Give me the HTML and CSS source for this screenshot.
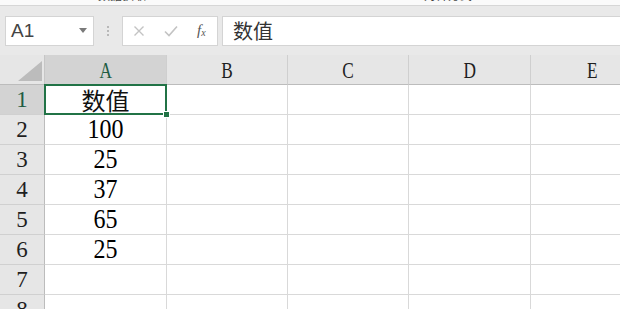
FILE: index.html
```html
<!DOCTYPE html>
<html lang="zh">
<head>
    <meta charset="utf-8">
    <title>数值</title>
    <link rel="stylesheet" href="styles.css">
</head>
<body>

<div class="ribbon">
    <span class="rb-label rb-data">数据获取</span>
    <span class="rb-launch rb-l1">⇲</span>
    <span class="rb-label rb-align">对齐方式</span>
    <span class="rb-launch rb-l2">⇲</span>
</div>

<div class="fbar">
    <div class="namebox">
        <span class="name">A1</span>
        <svg class="drop" width="8" height="5" viewBox="0 0 8 5"><path d="M0 0H8L4 5Z" fill="#7a7a7a"/></svg>
    </div>
    <div class="grip"><i></i><i></i><i></i></div>
    <div class="fxbox">
        <svg class="ico" width="12" height="12" viewBox="0 0 12 12"><path d="M1.5 1.5L10.5 10.5M10.5 1.5L1.5 10.5" stroke="#c3c3c3" stroke-width="1.4" fill="none"/></svg>
        <svg class="ico" width="14" height="12" viewBox="0 0 14 12"><path d="M1 6.5L5 10.5L13 1.5" stroke="#c3c3c3" stroke-width="1.6" fill="none"/></svg>
        <span class="fx">f<sub>x</sub></span>
    </div>
    <div class="formula">数值</div>
</div>

<div class="sheet">
    <div class="corner">
        <svg width="24" height="20" viewBox="0 0 24 20"><path d="M24 0V20H0Z" fill="#bcbcbc"/></svg>
    </div>
    <div class="colhead sel"><span>A</span></div>
    <div class="colhead"><span>B</span></div>
    <div class="colhead"><span>C</span></div>
    <div class="colhead"><span>D</span></div>
    <div class="colhead last"><span>E</span></div>

    <div class="rowhead sel">1</div>
    <div class="cell active">数值<span class="handle"></span></div>
    <div class="cell"></div><div class="cell"></div><div class="cell"></div><div class="cell last"></div>

    <div class="rowhead">2</div>
    <div class="cell"><span class="num">100</span></div>
    <div class="cell"></div><div class="cell"></div><div class="cell"></div><div class="cell last"></div>

    <div class="rowhead">3</div>
    <div class="cell"><span class="num">25</span></div>
    <div class="cell"></div><div class="cell"></div><div class="cell"></div><div class="cell last"></div>

    <div class="rowhead">4</div>
    <div class="cell"><span class="num">37</span></div>
    <div class="cell"></div><div class="cell"></div><div class="cell"></div><div class="cell last"></div>

    <div class="rowhead">5</div>
    <div class="cell"><span class="num">65</span></div>
    <div class="cell"></div><div class="cell"></div><div class="cell"></div><div class="cell last"></div>

    <div class="rowhead">6</div>
    <div class="cell"><span class="num">25</span></div>
    <div class="cell"></div><div class="cell"></div><div class="cell"></div><div class="cell last"></div>

    <div class="rowhead">7</div>
    <div class="cell"></div>
    <div class="cell"></div><div class="cell"></div><div class="cell"></div><div class="cell last"></div>

    <div class="rowhead">8</div>
    <div class="cell"></div>
    <div class="cell"></div><div class="cell"></div><div class="cell"></div><div class="cell last"></div>
</div>

</body>
</html>
```

FILE: styles.css
```css
html, body {
    margin: 0;
    padding: 0;
    overflow: hidden;
    background: #fff;
    font-family: "Liberation Sans", "Noto Sans CJK SC", sans-serif;
    color: #333;
}

/* bottom edge of the ribbon, mostly cut off */
.ribbon {
    height: 5px;
    overflow: hidden;
    background: #fafafa;
    border-bottom: 1px solid #d6d6d6;
    position: relative;
    font-size: 12px;
    color: #444;
}

.ribbon span {
    position: absolute;
    top: -11px;
    line-height: 14px;
}

.rb-data { left: 98px; }
.rb-l1 { left: 304px; font-size: 10px; }
.rb-align { left: 424px; }
.rb-l2 { left: 580px; font-size: 10px; }

/* formula bar */
.fbar {
    display: flex;
    align-items: center;
    height: 49px;
    padding: 0 0 0 5px;
    background: #e9e9e9;
    box-sizing: border-box;
}

.namebox, .fxbox, .formula {
    height: 30px;
    background: #fff;
    border: 1px solid #d4d4d4;
    box-sizing: border-box;
    display: flex;
    align-items: center;
}

.namebox {
    width: 89px;
    padding: 0 6px 0 5px;
    justify-content: space-between;
}

.name {
    font-size: 19px;
    color: #444;
}

.grip {
    width: 28px;
    display: flex;
    flex-direction: column;
    align-items: center;
    gap: 2px;
}

.grip i {
    display: block;
    width: 2px;
    height: 2px;
    background: #b8b8b8;
}

.fxbox {
    width: 96px;
    padding: 0 0 0 10px;
}

.fxbox .ico {
    margin-right: 19px;
}

.fxbox .ico + .ico {
    margin-right: 19px;
}

.fx {
    font-family: "Liberation Serif", serif;
    font-style: italic;
    font-size: 15px;
    color: #555;
}

.fx sub {
    font-size: 10px;
    vertical-align: -1px;
}

.formula {
    flex: 1;
    margin-left: 4px;
    border-right: none;
    padding-left: 10px;
    font-size: 20px;
    color: #333;
}

/* sheet grid */
.sheet {
    display: grid;
    grid-template-columns: 45px 122px 121px 121px 122px 122px;
    grid-auto-rows: 30px;
    font-family: "Liberation Serif", "Noto Sans CJK SC", serif;
    font-size: 24px;
    color: #111;
}

.corner {
    background: #e6e6e6;
    border-right: 1px solid #c6c6c6;
    border-bottom: 1px solid #bcbcbc;
    display: flex;
    align-items: flex-end;
    justify-content: flex-end;
    padding: 0 2px 3px 0;
    box-sizing: border-box;
}

.corner svg {
    display: block;
}

.colhead {
    background: #e6e6e6;
    border-right: 1px solid #cfcfcf;
    border-bottom: 1px solid #bcbcbc;
    display: flex;
    align-items: center;
    justify-content: center;
    padding-top: 2px;
    box-sizing: border-box;
    font-size: 24px;
    color: #1f1f1f;
}

.colhead span {
    display: inline-block;
    transform: scaleX(0.72);
}

.colhead.sel {
    background: #d3d3d3;
    color: #1f5c43;
}

.rowhead {
    background: #e6e6e6;
    border-right: 1px solid #bcbcbc;
    border-bottom: 1px solid #d0d0d0;
    display: flex;
    align-items: center;
    justify-content: center;
    padding-top: 1px;
    box-sizing: border-box;
    font-size: 23px;
    color: #1f1f1f;
}

.rowhead.sel {
    background: #d3d3d3;
    color: #1f5c43;
}

.cell {
    border-right: 1px solid #d9d9d9;
    border-bottom: 1px solid #d9d9d9;
    display: flex;
    align-items: center;
    justify-content: center;
    box-sizing: border-box;
    position: relative;
}

.cell .num {
    display: inline-block;
    transform: scaleY(1.1);
    color: #000;
}

.colhead.last, .cell.last {
    border-right: none;
}

.cell.active {
    font-family: "Noto Sans CJK SC", sans-serif;
    font-size: 24px;
}

.cell.active::after {
    content: "";
    position: absolute;
    left: -1px;
    top: -1px;
    right: -1px;
    bottom: -1px;
    border: 2px solid #217346;
}

.handle {
    position: absolute;
    right: -4px;
    bottom: -4px;
    width: 5px;
    height: 5px;
    background: #217346;
    border: 1px solid #fff;
    z-index: 2;
}
```
